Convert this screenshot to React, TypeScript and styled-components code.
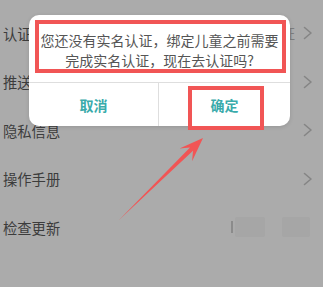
import React from "react";
import styled, { createGlobalStyle } from "styled-components";

const Global = createGlobalStyle`
  html, body { margin: 0; padding: 0; }
  body {
    background: #ababab;
    font-family: "Noto Sans CJK SC", "Noto Sans", sans-serif;
  }
`;

const Screen = styled.div`
  position: relative;
  width: 323px;
  height: 287px;
  overflow: hidden;
  background: #ababab;
`;

const List = styled.div`
  display: flex;
  flex-direction: column;
  padding-top: 9px;
`;

const Row = styled.div`
  display: flex;
  align-items: center;
  height: 48.5px;
  padding: 0 10px 0 3px;
`;

const Label = styled.span`
  flex: 1;
  font-size: 14.3px;
  color: #3c3c3c;
`;

const Value = styled.span`
  font-size: 14px;
  color: #7d7d7d;
  margin-right: 8px;
`;

const Blurs = styled.div`
  display: flex;
  align-items: center;
  margin-right: 3px;
`;

const Tick = styled.span`
  width: 2px;
  height: 12px;
  background: #777;
  opacity: 0.6;
  margin-right: 2px;
`;

const Blur = styled.span<{ w: number; gap?: number }>`
  width: ${(p) => p.w}px;
  height: 20px;
  margin-left: ${(p) => p.gap ?? 0}px;
  background: #a6a6a6;
  border-radius: 2px;
`;

const Chevron = () => (
  <svg width="10" height="14" viewBox="0 0 10 14">
    <polyline points="1.5,1.5 8,7 1.5,12.5" fill="none" stroke="#858585" strokeWidth="1.6" strokeLinejoin="round" strokeLinecap="round" />
  </svg>
);

const Dialog = styled.div`
  position: absolute;
  left: 29px;
  top: 15px;
  width: 261px;
  height: 111px;
  background: #fff;
  border-radius: 10px;
  box-shadow: 0 1px 4px rgba(0, 0, 0, 0.12);
  display: flex;
  flex-direction: column;
`;

const Message = styled.div`
  height: 68px;
  display: flex;
  align-items: center;
  justify-content: center;
  text-align: center;
  font-size: 14px;
  line-height: 20px;
  color: #555;
  border-bottom: 1px solid #dedede;
  box-sizing: border-box;
  padding-top: 3px;
`;

const Buttons = styled.div`
  flex: 1;
  display: grid;
  grid-template-columns: 130px 1fr;
`;

const Btn = styled.div<{ divider?: boolean }>`
  display: flex;
  align-items: center;
  justify-content: center;
  font-size: 14px;
  font-weight: 700;
  color: #3aabab;
  border-right: ${(p) => (p.divider ? "1px solid #dedede" : "none")};
`;

const Mark = styled.div<{ l: number; t: number; w: number; h: number }>`
  position: absolute;
  left: ${(p) => p.l}px;
  top: ${(p) => p.t}px;
  width: ${(p) => p.w}px;
  height: ${(p) => p.h}px;
  border: 4px solid #f15555;
  box-sizing: border-box;
`;

const ArrowLayer = styled.svg`
  position: absolute;
  left: 0;
  top: 0;
  pointer-events: none;
`;

const rows = [
  { label: "认证", value: "证" },
  { label: "推送" },
  { label: "隐私信息" },
  { label: "操作手册" },
  { label: "检查更新", blur: true, noChevron: true },
];

export default function App() {
  return (
    <>
      <Global />
      <Screen>
        <List>
          {rows.map((r) => (
            <Row key={r.label}>
              <Label>{r.label}</Label>
              {r.value && <Value>{r.value}</Value>}
              {r.blur && (
                <Blurs>
                  <Tick />
                  <Blur w={30} />
                  <Blur w={28} gap={17} />
                </Blurs>
              )}
              {!r.noChevron && <Chevron />}
            </Row>
          ))}
        </List>
        <Dialog>
          <Message>
            <div>
              您还没有实名认证，绑定儿童之前需要
              <br />
              完成实名认证，现在去认证吗?
            </div>
          </Message>
          <Buttons>
            <Btn divider>取消</Btn>
            <Btn>确定</Btn>
          </Buttons>
        </Dialog>
        <Mark l={35} t={20} w={251} h={53} />
        <Mark l={188} t={86} w={76} h={44} />
        <ArrowLayer width="323" height="287" viewBox="0 0 323 287">
          <polygon
            points="119,220 193,150.8 192.1,161.2 203,138 179.5,148.4 190,147.6"
            fill="#f15555"
          />
        </ArrowLayer>
      </Screen>
    </>
  );
}
